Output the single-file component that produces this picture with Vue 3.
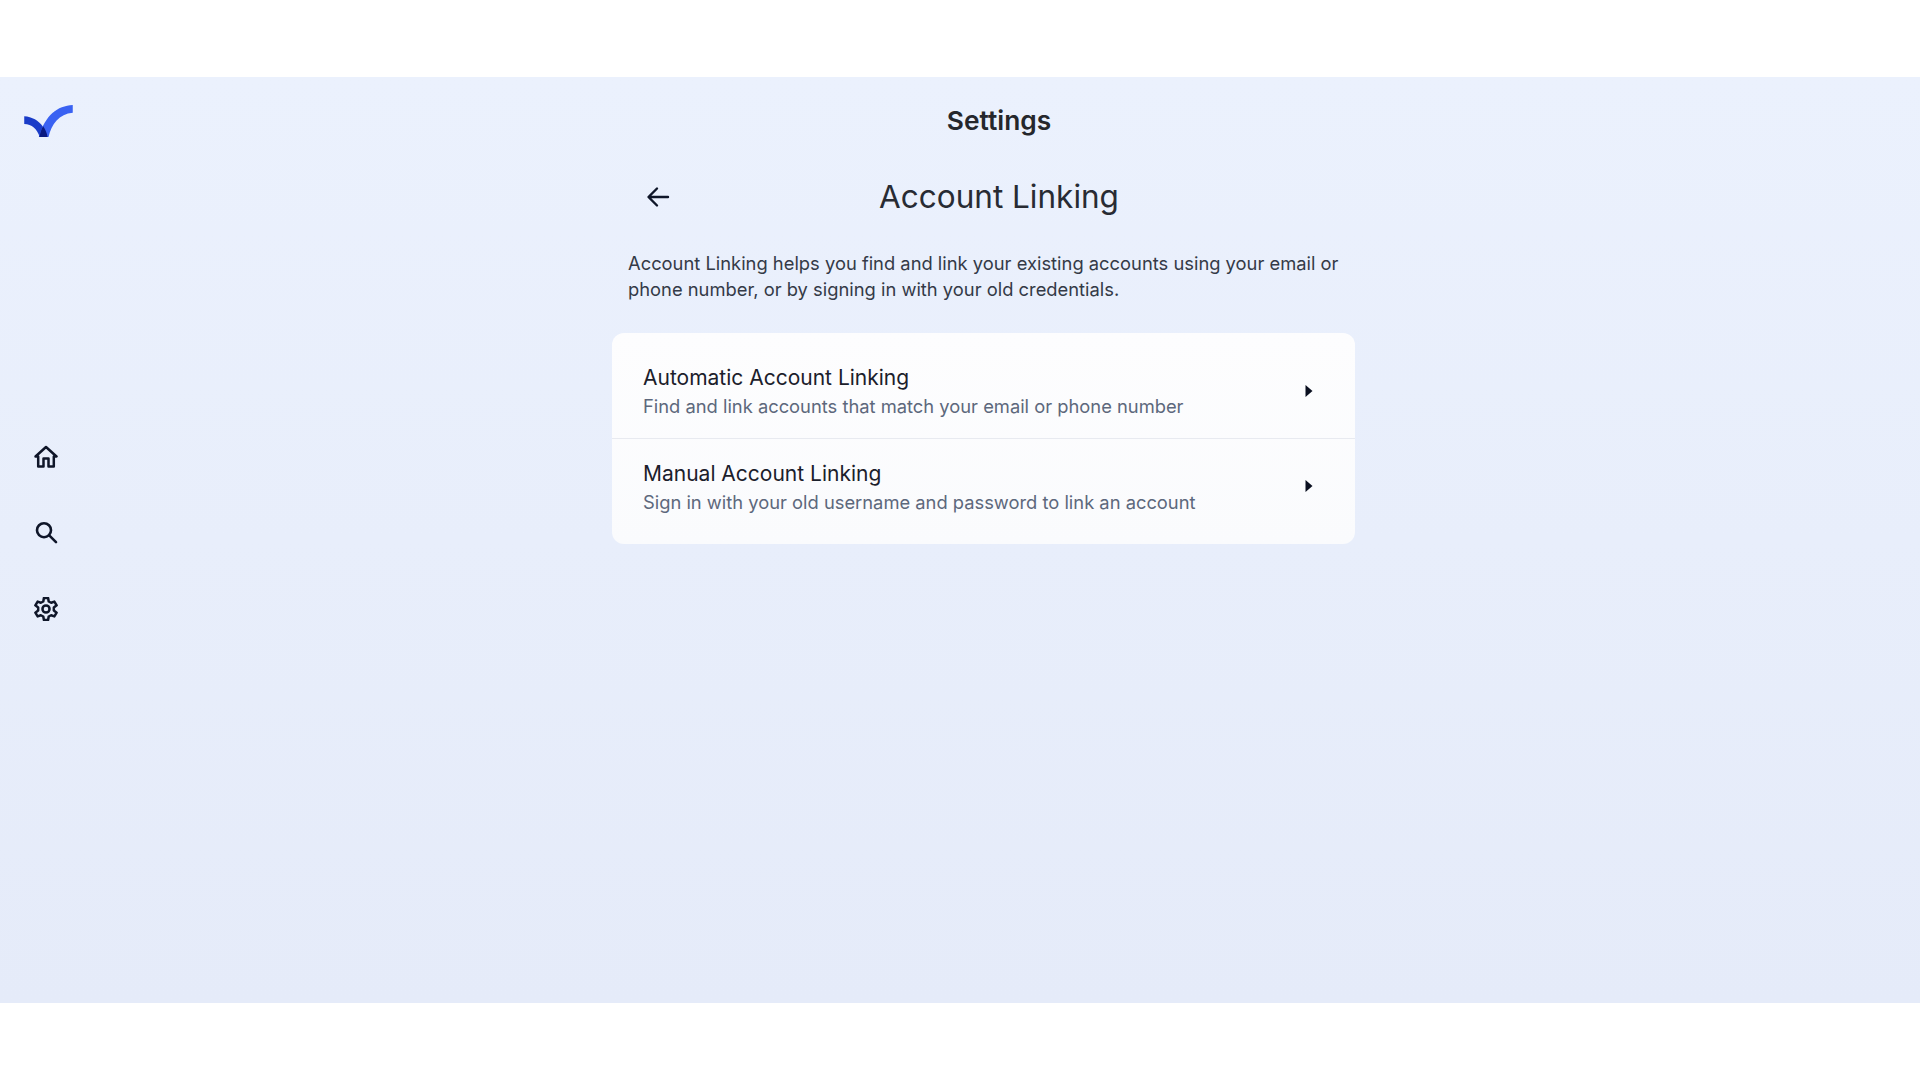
<script setup>
const rows = [
  { title: 'Automatic Account Linking', sub: 'Find and link accounts that match your email or phone number' },
  { title: 'Manual Account Linking', sub: 'Sign in with your old username and password to link an account' },
]
</script>

<template>
  <div class="page">
    <div class="app">
      <aside class="side">
        <svg class="logo" width="49" height="33" viewBox="0 0 50 34">
          <path d="M0 11.500 C8 12 15 16 19 22 L24 33 L16 33 C13 24 8 20 0 19.500 Z" fill="#1a3cc8"/>
          <path d="M50 0 C34 1 22 10 15 33 L25 33 C28 20 36 9 50 8 Z" fill="#3a62f2"/>
          <path d="M19.500 22 C17.500 25 16.500 29 15.500 33 L24 33 C23.500 29 21.500 25 19.500 22 Z" fill="#0b1a80"/>
        </svg>
        <nav class="nav">
          <svg class="icon" viewBox="0 0 24 24" fill="none" stroke="#0f1629" stroke-width="2.500" stroke-linejoin="round">
            <path d="M1.500 11.500 L12 2 L22.500 11.500 H19.800 V21.500 H14.500 V13.500 H9.500 V21.500 H4.200 V11.500 Z"/>
          </svg>
          <svg class="icon" viewBox="0 0 24 24" fill="none" stroke="#0f1629" stroke-width="2.600" stroke-linecap="round">
            <circle cx="10" cy="9.200" r="7"/>
            <path d="M15.200 14.400 L22 21.200"/>
          </svg>
          <svg class="icon" viewBox="0.500 0.500 23 23" fill="none" stroke="#0f1629" stroke-width="2.400" stroke-linejoin="round">
            <circle cx="12" cy="12" r="3.400"/>
            <path d="M10 1.500 H14 L14.600 4.800 L16.900 6 L20 4.900 L22.200 8.500 L19.500 10.500 V13.500 L22.200 15.500 L20 19.100 L16.900 18 L14.600 19.200 L14 22.500 H10 L9.400 19.200 L7.100 18 L4 19.100 L1.800 15.500 L4.500 13.500 V10.500 L1.800 8.500 L4 4.900 L7.100 6 L9.400 4.800 Z"/>
          </svg>
        </nav>
      </aside>
      <main class="main">
        <h1 class="heading">Settings</h1>
        <div class="column">
          <div class="title-row">
            <svg class="back" width="26" height="26" viewBox="0 0 26 26" fill="none" stroke="#0f1629" stroke-width="2.400" stroke-linecap="round" stroke-linejoin="round">
              <path d="M23 13 H4 M12 4.500 L3.500 13 L12 21.500"/>
            </svg>
            <h2 class="title">Account Linking</h2>
          </div>
          <p class="desc">Account Linking helps you find and link your existing accounts using your email or phone number, or by signing in with your old credentials.</p>
          <div class="card">
            <div v-for="r in rows" :key="r.title" class="row">
              <div class="texts">
                <div class="row-title">{{ r.title }}</div>
                <div class="row-sub">{{ r.sub }}</div>
              </div>
              <svg class="caret" width="8" height="14" viewBox="0 0 8 14"><path d="M0.500 1 L7.500 7 L0.500 13 Z" fill="#0b1020"/></svg>
            </div>
          </div>
        </div>
      </main>
    </div>
  </div>
</template>

<style>
html, body { margin: 0; background: #fff; }
</style>

<style scoped>
.page {
  height: 1080px;
  padding: 77px 0;
  box-sizing: border-box;
  font-family: Inter, "Liberation Sans", sans-serif;
}
.app {
  height: 926px;
  display: flex;
  background: linear-gradient(180deg, #ebf1fd 0%, #e5ebf9 100%);
}
.side {
  width: 78px;
  flex: none;
  display: flex;
  flex-direction: column;
  align-items: flex-start;
}
.logo { margin: 28px 0 0 24px; }
.nav {
  margin-top: 307px;
  margin-left: 34px;
  display: flex;
  flex-direction: column;
  gap: 52px;
}
.icon { width: 24px; height: 24px; display: block; }
.main {
  flex: 1;
  display: flex;
  flex-direction: column;
  align-items: center;
}
.heading {
  margin: 21px 0 0;
  font-size: 26.300px;
  line-height: 46px;
  font-weight: 600;
  color: #25272c;
}
.column {
  width: 774px;
  margin-top: 31px;
}
.title-row {
  position: relative;
  height: 44px;
  display: flex;
  align-items: center;
  justify-content: center;
}
.back { position: absolute; left: 33px; top: 9px; }
.title {
  margin: 0;
  font-size: 31.500px;
  line-height: 44px;
  font-weight: 400;
  color: #282b33;
}
.desc {
  width: 730px;
  margin: 31px 0 0 16px;
  font-size: 18.350px;
  line-height: 26px;
  color: #343a47;
}
.card {
  width: 743px;
  margin-top: 31px;
  padding: 10px 0;
  box-sizing: border-box;
  border-radius: 12px;
  background: linear-gradient(180deg, #fdfdfe 0%, #fafbfd 100%);
  overflow: hidden;
}
.row {
  height: 95px;
  padding: 0 42px 0 31px;
  display: flex;
  align-items: center;
  justify-content: space-between;
}
.row:first-child { border-bottom: 1px solid #e8eaf0; }
.row-title {
  font-size: 21px;
  line-height: 29px;
  color: #1b202b;
}
.row-sub {
  font-size: 18.330px;
  line-height: 29px;
  color: #5d687c;
}
.texts { padding-top: 2px; }
.row:last-child .caret { margin-top: -1px; }
</style>
